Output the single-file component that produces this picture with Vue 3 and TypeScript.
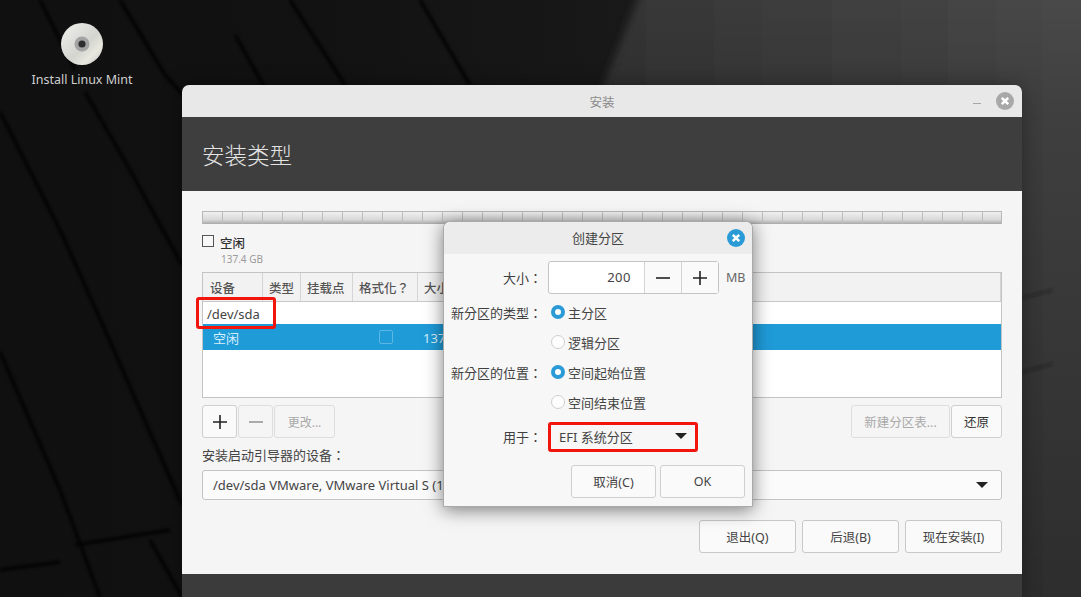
<script setup lang="ts">
const columns = [
  { label: '设备', width: 60 },
  { label: '类型', width: 38 },
  { label: '挂载点', width: 52 },
  { label: '格式化？', width: 65 },
  { label: '大小', width: 583 },
];
const ticks = Array.from({ length: 40 }, (_, i) => i);
const streaks = [
  'M40 0L75 70', 'M120 0L165 75L192 105', 'M235 35L265 88', 'M290 0L345 85', 'M420 0L470 85',
  'M0 112L60 230L105 330L182 505', 'M85 92L130 170L182 265', 'M0 352L60 490L100 597', 'M150 540L182 597',
  'M0 570L60 562', 'M75 545L170 530',
];
</script>

<template>
  <div class="desktop">
    <svg class="wall" width="1081" height="597" viewBox="0 0 1081 597">
      <defs>
        <linearGradient id="lightH" x1="0" y1="0" x2="1" y2="0">
          <stop offset="0" stop-color="#2c2c2c" />
          <stop offset="1" stop-color="#4a4a4a" />
        </linearGradient>
        <linearGradient id="shadeV" x1="0" y1="0" x2="0" y2="1">
          <stop offset="0" stop-color="#000" stop-opacity="0" />
          <stop offset="0.2" stop-color="#000" stop-opacity="0.14" />
          <stop offset="1" stop-color="#000" stop-opacity="0.38" />
        </linearGradient>
        <filter id="soft"><feGaussianBlur stdDeviation="1.8" /></filter>
        <filter id="softer"><feGaussianBlur stdDeviation="5" /></filter>
      </defs>
      <polygon points="645,-20 1100,-20 1100,620 400,620" fill="url(#lightH)" filter="url(#softer)" />
      <polygon points="645,0 1081,0 1081,597 400,597" fill="url(#shadeV)" />
      <g filter="url(#soft)" opacity="0.8">
        <path v-for="d in streaks" :key="d" :d="d" stroke="#040404" stroke-width="3.5" fill="none" />
        <path d="M1022 298l30-8M1022 372l30-8" stroke="#171717" stroke-width="1.5" fill="none" />
      </g>
    </svg>

    <div class="launcher">
      <svg width="42" height="42" viewBox="0 0 42 42">
        <defs>
          <linearGradient id="disc" x1="0" y1="0" x2="1" y2="1">
            <stop offset="0" stop-color="#f1f1ee" />
            <stop offset="0.55" stop-color="#d4d4d0" />
            <stop offset="0.75" stop-color="#e8e8df" />
            <stop offset="1" stop-color="#c6c6c6" />
          </linearGradient>
        </defs>
        <circle cx="21" cy="21" r="21" fill="url(#disc)" />
        <circle cx="21" cy="21" r="7.5" fill="#a3a3a3" />
        <circle cx="21" cy="21" r="3.6" fill="#2e2e2e" />
      </svg>
      <span>Install Linux Mint</span>
    </div>

    <section class="window">
      <header class="titlebar">
        <span>安装</span>
        <i class="minimize"></i>
        <svg class="close" width="18" height="18" viewBox="0 0 18 18">
          <circle cx="9" cy="9" r="9" fill="#a8a8a8" />
          <path d="M5.8 5.8l6.4 6.4M12.2 5.8l-6.4 6.4" stroke="#fff" stroke-width="2.6" />
        </svg>
      </header>
      <div class="banner">安装类型</div>

      <div class="content">
        <div class="partbar">
          <i v-for="t in ticks" :key="t"></i>
        </div>

        <div class="legend">
          <i class="legend-box"></i>
          <div>
            <strong>空闲</strong>
            <small>137.4 GB</small>
          </div>
        </div>

        <div class="table">
          <div class="thead">
            <div v-for="c in columns" :key="c.label" class="th" :style="{ width: c.width + 'px' }">{{ c.label }}</div>
          </div>
          <div class="row-dev">/dev/sda</div>
          <div class="row-free">
            <span class="free-name">空闲</span>
            <i class="free-check"></i>
            <span class="free-size">137</span>
          </div>
        </div>

        <div class="toolbar">
          <button class="btn icon">
            <svg width="14" height="14" viewBox="0 0 14 14"><path d="M7 0v14M0 7h14" stroke="#222" stroke-width="1.6" /></svg>
          </button>
          <button class="btn icon off">
            <svg width="14" height="14" viewBox="0 0 14 14"><path d="M0 7h14" stroke="#999" stroke-width="1.6" /></svg>
          </button>
          <button class="btn change off">更改...</button>
          <span class="spacer"></span>
          <button class="btn newtable off">新建分区表...</button>
          <button class="btn revert">还原</button>
        </div>

        <label class="boot-label">安装启动引导器的设备：</label>
        <div class="combo">
          <span>/dev/sda VMware, VMware Virtual S (137.4 GB)</span>
          <i class="caret"></i>
        </div>

        <div class="actions">
          <button class="btn action">退出(Q)</button>
          <button class="btn action">后退(B)</button>
          <button class="btn action wide">现在安装(I)</button>
        </div>
      </div>
      <div class="window-foot"></div>
    </section>

    <section class="dialog">
      <header class="dialog-title">
        <span>创建分区</span>
        <svg class="dialog-close" width="18" height="18" viewBox="0 0 18 18">
          <circle cx="9" cy="9" r="9" fill="#2a9bd6" />
          <path d="M5.8 5.8l6.4 6.4M12.2 5.8l-6.4 6.4" stroke="#fff" stroke-width="2.6" />
        </svg>
      </header>
      <div class="form">
        <div class="form-row size-row">
          <label>大小：</label>
          <div class="spin">
            <span class="spin-value">200</span>
            <span class="spin-btn"><svg width="14" height="14" viewBox="0 0 14 14"><path d="M0 7h14" stroke="#222" stroke-width="1.6" /></svg></span>
            <span class="spin-btn"><svg width="14" height="14" viewBox="0 0 14 14"><path d="M7 0v14M0 7h14" stroke="#222" stroke-width="1.6" /></svg></span>
          </div>
          <span class="unit">MB</span>
        </div>
        <div class="form-row radio-row">
          <label>新分区的类型：</label>
          <span class="radio on"></span><span>主分区</span>
        </div>
        <div class="form-row radio-row">
          <label></label>
          <span class="radio"></span><span>逻辑分区</span>
        </div>
        <div class="form-row radio-row">
          <label>新分区的位置：</label>
          <span class="radio on"></span><span>空间起始位置</span>
        </div>
        <div class="form-row radio-row">
          <label></label>
          <span class="radio"></span><span>空间结束位置</span>
        </div>
        <div class="form-row use-row">
          <label>用于：</label>
          <div class="use-combo">
            <span>EFI 系统分区</span>
            <i class="caret"></i>
          </div>
        </div>
        <div class="dialog-actions">
          <button class="btn dlg">取消(C)</button>
          <button class="btn dlg">OK</button>
        </div>
      </div>
    </section>

    <div class="mark mark-dev"></div>
    <div class="mark mark-use"></div>
  </div>
</template>

<style scoped>
.desktop {
  position: relative;
  width: 1081px;
  height: 597px;
  overflow: hidden;
  font-family: "Noto Sans", "Noto Sans CJK SC", sans-serif;
  font-size: 13px;
  color: #3d3d3d;
  background: linear-gradient(90deg, #101010 0%, #121212 30%, #191919 60%, #1a1a1a 100%);
}
.wall {
  position: absolute;
  inset: 0;
}
.launcher {
  position: absolute;
  left: 31px;
  top: 23px;
  width: 102px;
  display: flex;
  flex-direction: column;
  align-items: center;
  gap: 6px;
  color: #cfcfcf;
  font-size: 12.5px;
  line-height: 17px;
  white-space: nowrap;
}
.window {
  position: absolute;
  left: 182px;
  top: 85px;
  width: 840px;
  height: 512px;
  display: flex;
  flex-direction: column;
  border-radius: 7px 7px 0 0;
  overflow: hidden;
  box-shadow: 0 0 20px rgba(0, 0, 0, 0.35);
}
.titlebar {
  position: relative;
  height: 32px;
  flex: none;
  display: flex;
  align-items: center;
  justify-content: center;
  background: #e8e8e8;
  color: #8a8a8a;
  font-size: 12.5px;
}
.minimize {
  position: absolute;
  left: 791px;
  top: 18px;
  width: 8px;
  height: 1px;
  background: #a6a6a6;
}
.close {
  position: absolute;
  left: 814px;
  top: 7px;
}
.banner {
  height: 74px;
  flex: none;
  background: #3e3e3e;
  color: #e4e4e4;
  font-size: 22.5px;
  font-weight: 300;
  line-height: 78px;
  padding-left: 20px;
}
.content {
  height: 383px;
  flex: none;
  box-sizing: border-box;
  padding: 20px 20px 0;
  background: #f6f5f6;
}
.window-foot {
  flex: 1;
  background: #3b3b3b;
}
.partbar {
  height: 13px;
  display: flex;
  overflow: hidden;
  border: 1px solid #b8b8b8;
  border-bottom: none;
  box-sizing: border-box;
  background: linear-gradient(#f0f0f0, #d8d8d8 65%, #a8a8a8);
}
.partbar i {
  width: 20px;
  flex: none;
  box-sizing: border-box;
  border-right: 1px solid #bcbcbc;
}
.legend {
  display: flex;
  gap: 6px;
  margin-top: 11px;
  height: 37px;
}
.legend-box {
  width: 10px;
  height: 10px;
  flex: none;
  border: 1px solid #555;
  background: #f8f8f8;
}
.legend strong {
  display: block;
  font-size: 12.5px;
  font-weight: 500;
  line-height: 17px;
  color: #333;
}
.legend small {
  display: block;
  font-size: 10px;
  line-height: 14px;
  margin-left: 1px;
  color: #9a9a9a;
}
.table {
  height: 126px;
  box-sizing: border-box;
  border: 1px solid #c4c4c4;
  background: #fff;
}
.thead {
  display: flex;
  height: 29px;
  box-sizing: border-box;
  background: #f3f2f2;
  border-bottom: 1px solid #c8c8c8;
}
.th {
  box-sizing: border-box;
  padding: 1px 0 0 6px;
  line-height: 29px;
  font-family: "Noto Sans", "Noto Sans CJK TC", sans-serif;
  font-size: 12.5px;
  font-weight: 500;
  color: #555;
  white-space: nowrap;
  border-right: 1px solid #d4d4d4;
}
.th:first-child {
  padding-left: 7px;
}
.row-dev {
  height: 22px;
  line-height: 24px;
  padding-left: 4px;
  font-size: 13px;
  color: #444;
}
.row-free {
  position: relative;
  height: 26px;
  line-height: 28px;
  background: #1f9bd8;
  color: #d8eefa;
  font-size: 13px;
}
.free-name {
  position: absolute;
  left: 10px;
}
.free-check {
  position: absolute;
  left: 176px;
  top: 6px;
  width: 12px;
  height: 12px;
  border: 1px solid #5cb7e4;
  border-radius: 2px;
}
.free-size {
  position: absolute;
  left: 220px;
}
.toolbar {
  display: flex;
  margin-top: 7px;
  height: 33px;
}
.spacer {
  flex: 1;
}
.btn {
  box-sizing: border-box;
  border: 1px solid #cfcfcf;
  border-radius: 3px;
  background: #fafafa;
  color: #444;
  font: inherit;
  font-size: 12.5px;
  padding: 0;
  display: flex;
  align-items: center;
  justify-content: center;
}
.off {
  background: #f5f5f5;
  color: #a9a9a9;
  border-color: #dedede;
}
.icon {
  width: 35px;
  margin-right: 1px;
}
.change {
  width: 61px;
  font-size: 12px;
}
.newtable {
  width: 99px;
}
.revert {
  width: 51px;
  margin-left: 1px;
  color: #333;
}
.boot-label {
  display: block;
  margin-top: 8px;
  height: 24px;
  line-height: 18px;
  font-family: "Noto Sans", "Noto Sans CJK TC", sans-serif;
  font-size: 13px;
  color: #444;
}
.combo {
  height: 30px;
  box-sizing: border-box;
  border: 1px solid #c4c4c4;
  border-radius: 3px;
  background: #fbfbfb;
  display: flex;
  align-items: center;
  justify-content: space-between;
  padding: 0 13px 0 10px;
  font-size: 13px;
  color: #444;
}
.caret {
  width: 0;
  height: 0;
  border-left: 6px solid transparent;
  border-right: 6px solid transparent;
  border-top: 6px solid #222;
}
.actions {
  display: flex;
  justify-content: flex-end;
  gap: 6px;
  margin-top: 20px;
}
.action {
  width: 97px;
  height: 33px;
  border-color: #c8c8c8;
}
.dialog {
  position: absolute;
  left: 443px;
  top: 221px;
  width: 310px;
  height: 286px;
  box-sizing: border-box;
  border: 1px solid #a9a9a9;
  border-radius: 7px 7px 0 0;
  background: #f7f7f7;
  box-shadow: 0 3px 18px rgba(0, 0, 0, 0.5);
}
.dialog-title {
  position: relative;
  height: 32px;
  background: #ececec;
  border-radius: 7px 7px 0 0;
  text-align: center;
  line-height: 33px;
  font-size: 13px;
  color: #444;
}
.dialog-close {
  position: absolute;
  left: 283px;
  top: 7px;
}
.form {
  padding-top: 7px;
}
.form-row {
  display: flex;
  align-items: center;
  height: 30px;
  font-size: 13px;
  color: #444;
}
.form-row label {
  width: 98px;
  flex: none;
  text-align: right;
  font-family: "Noto Sans", "Noto Sans CJK TC", sans-serif;
  color: #3f3f3f;
}
.size-row {
  height: 33px;
  margin-bottom: 3px;
}
.spin {
  width: 171px;
  height: 33px;
  margin-left: 6px;
  box-sizing: border-box;
  display: flex;
  border: 1px solid #c4c4c4;
  border-radius: 3px;
  background: #fff;
}
.spin-value {
  flex: 1;
  text-align: right;
  padding-right: 13px;
  line-height: 31px;
  letter-spacing: 0.5px;
}
.spin-btn {
  width: 36px;
  display: flex;
  align-items: center;
  justify-content: center;
  background: #fafafa;
  border-left: 1px solid #d4d4d4;
}
.unit {
  margin-left: 7px;
  font-size: 12.5px;
  color: #666;
}
.radio {
  width: 14px;
  height: 14px;
  margin: 0 3px 0 9px;
  flex: none;
  box-sizing: border-box;
  border: 1px solid #cfcfcf;
  border-radius: 50%;
  background: #fdfdfd;
}
.radio.on {
  border: 4.5px solid #2a9bd6;
  background: #fff;
}
.use-row {
  margin-top: 4px;
  height: 30px;
}
.use-combo {
  width: 148px;
  height: 28px;
  margin-left: 7px;
  box-sizing: border-box;
  padding: 0 10px 0 10px;
  display: flex;
  align-items: center;
  justify-content: space-between;
  font-size: 13px;
  color: #444;
}
.dialog-actions {
  display: flex;
  justify-content: flex-end;
  gap: 4px;
  margin: 14px 7px 0 0;
}
.dlg {
  width: 85px;
  height: 33px;
}
.mark {
  position: absolute;
  box-sizing: border-box;
  border: 3px solid #f3140c;
  border-radius: 3px;
}
.mark-dev {
  left: 196px;
  top: 297px;
  width: 80px;
  height: 32px;
}
.mark-use {
  left: 548px;
  top: 422px;
  width: 150px;
  height: 30px;
}
</style>
